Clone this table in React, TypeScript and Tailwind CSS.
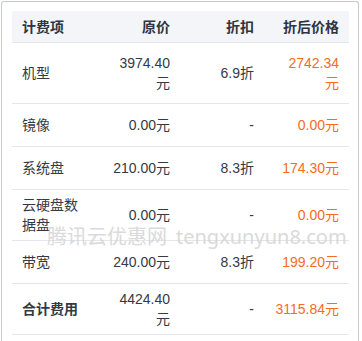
import React from "react";

type Row = {
  name: string[];
  price: string[];
  disc: string;
  final: string[];
  h: string;
  bold?: boolean;
};

const rows: Row[] = [
  { name: ["机型"], price: ["3974.40", "元"], disc: "6.9折", final: ["2742.34", "元"], h: "h-[61px]" },
  { name: ["镜像"], price: ["0.00元"], disc: "-", final: ["0.00元"], h: "h-[43px]" },
  { name: ["系统盘"], price: ["210.00元"], disc: "8.3折", final: ["174.30元"], h: "h-[43px]" },
  { name: ["云硬盘数", "据盘"], price: ["0.00元"], disc: "-", final: ["0.00元"], h: "h-[51px]" },
  { name: ["带宽"], price: ["240.00元"], disc: "8.3折", final: ["199.20元"], h: "h-[43px]" },
  { name: ["合计费用"], price: ["4424.40", "元"], disc: "-", final: ["3115.84元"], h: "h-[51px]", bold: true },
];

function Lines({ lines }: { lines: string[] }) {
  return (
    <div className="flex flex-col">
      {lines.map((l, i) => (
        <span key={i} className="whitespace-nowrap">
          {l}
        </span>
      ))}
    </div>
  );
}

export default function App() {
  return (
    <div
      className="w-[362px] h-[341px] bg-white overflow-hidden relative"
      style={{ fontFamily: '"Liberation Sans", "Noto Sans CJK SC", sans-serif' }}
    >
      <div className="ml-px mt-px w-[358px] h-[340px] border-l border-t border-r border-[#c6c9ce] rounded-t-[3px] pl-[10px] pt-[9px]">
        <div className="w-[337px] text-[14px] leading-[20px] text-[#333a44]">
          <div className="grid grid-cols-[88px_80px_84px_85px] h-[32px] bg-[#f3f5f8] border-b border-[#e3e6eb] font-bold text-[#2f3540]">
            <div className="flex items-center pl-[10px]">计费项</div>
            <div className="flex items-center justify-end pr-[10px]">原价</div>
            <div className="flex items-center justify-end pr-[10px]">折扣</div>
            <div className="flex items-center justify-end pr-[10px]">折后价格</div>
          </div>
          {rows.map((r, i) => (
            <div
              key={i}
              className={`grid grid-cols-[88px_80px_84px_85px] ${r.h} border-b border-[#e3e6eb]`}
            >
              <div className={`flex items-center pl-[10px] ${r.bold ? "font-bold" : ""}`}>
                <Lines lines={r.name} />
              </div>
              <div className="flex items-center justify-end pr-[10px] text-right">
                <Lines lines={r.price} />
              </div>
              <div className="flex items-center justify-end pr-[10px]">{r.disc}</div>
              <div className="flex items-center justify-end pr-[10px] text-right text-[#f76b1c]">
                <Lines lines={r.final} />
              </div>
            </div>
          ))}
        </div>
      </div>
      <div className="absolute left-[47px] top-[225px] flex items-baseline gap-[9px] text-[20px] leading-[24px] text-[#d2d2d2] opacity-80 whitespace-nowrap pointer-events-none">
        <span>腾讯云优惠网</span>
        <span style={{ fontFamily: '"Noto Sans", sans-serif' }}>tengxunyun8.com</span>
      </div>
    </div>
  );
}
